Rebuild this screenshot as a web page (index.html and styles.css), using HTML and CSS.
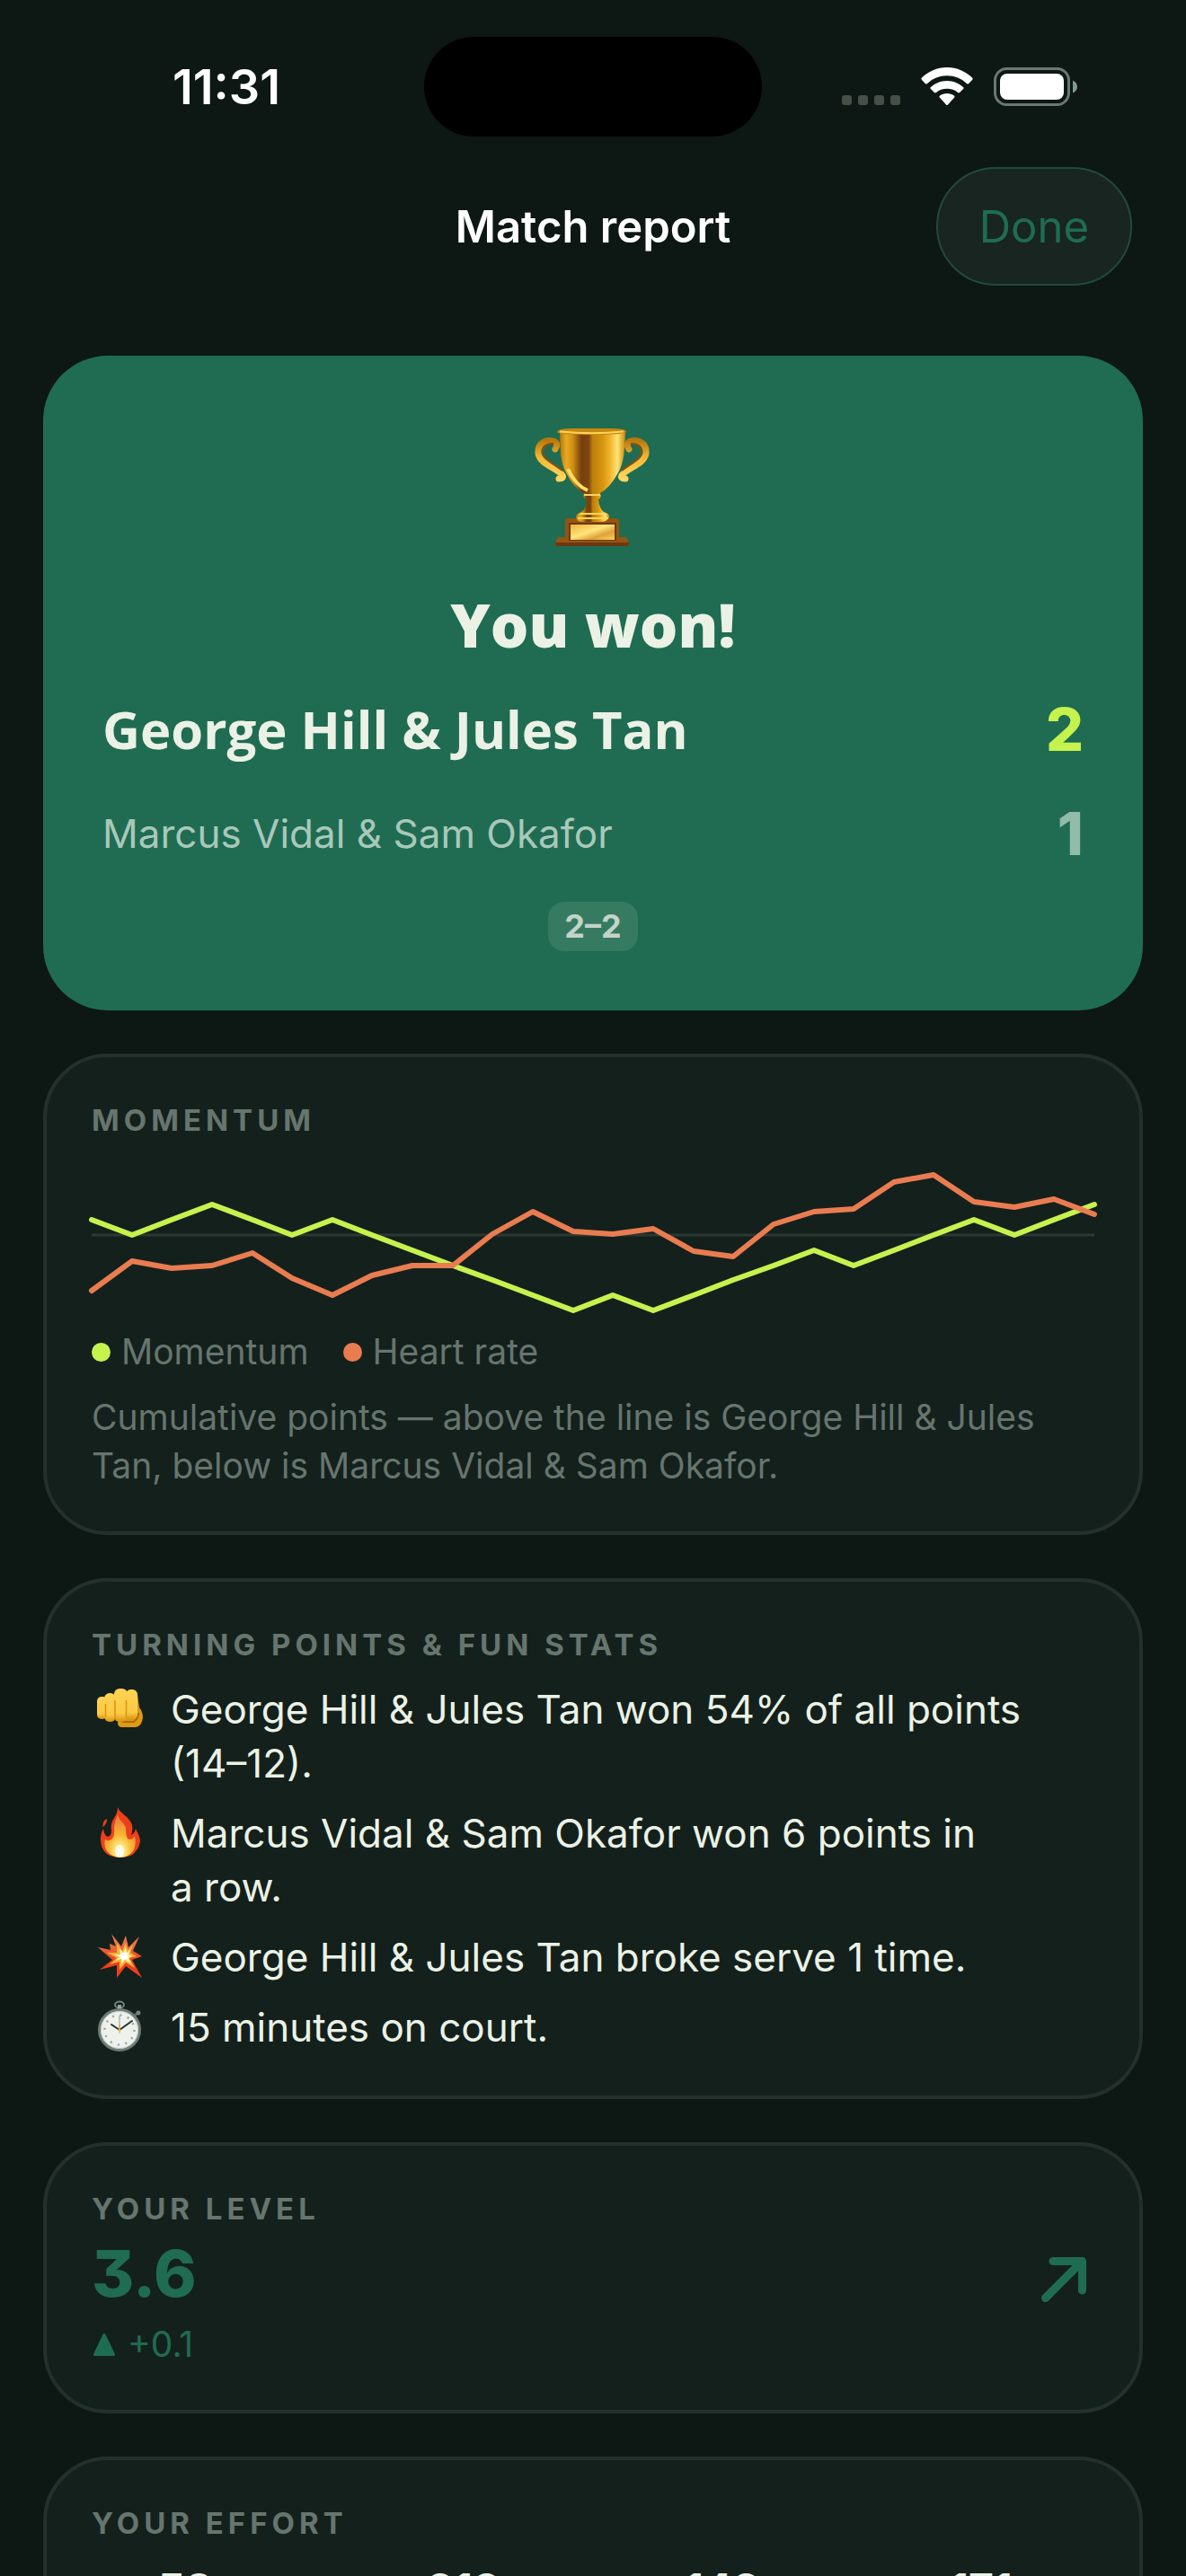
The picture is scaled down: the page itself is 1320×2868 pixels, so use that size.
FILE: index.html
```
<!DOCTYPE html>
<html lang="en">
<head>
  <meta charset="UTF-8" />
  <meta name="viewport" content="width=device-width, initial-scale=1" />
  <title>Match report</title>
  <link rel="stylesheet" href="styles.css">
</head>
<body>
<div class="screen">
  <div class="status-bar">
    <span class="time">11:31</span>
    <div class="island"></div>
    <div class="status-icons">
      <svg width="65" height="43" viewBox="0 0 65 43" fill="#465048" aria-hidden="true">
        <rect x="0" y="31" width="11" height="11" rx="3"/>
        <rect x="18" y="31" width="11" height="11" rx="3"/>
        <rect x="36" y="31" width="11" height="11" rx="3"/>
        <rect x="54" y="31" width="11" height="11" rx="3"/>
      </svg>
      <svg width="58" height="43" viewBox="0 0 58 43" fill="#fff" aria-hidden="true">
        <path d="M29 0C40 0 50 4.500 57.500 12Q58 13 57 14L53 18.200Q52 19 51 18Q42 9.300 29 9.300T7 18Q6 19 5 18.200L1 14Q0 13 .5 12C8 4.500 18 0 29 0Z"/>
        <path d="M29 15C36 15 42.500 17.800 47.300 22.300Q48 23 47.200 24L43 28Q42 28.800 41 28Q36 23.800 29 23.800T17 28Q16 28.800 15 28L10.800 24Q10 23 10.700 22.300C15.500 17.800 22 15 29 15Z"/>
        <path d="M29 29C32 29 35 30 37.200 31.700Q38 32.600 37.200 33.500L30 41.500Q29 42.600 28 41.500L20.800 33.500Q20 32.600 20.800 31.700C23 30 26 29 29 29Z"/>
      </svg>
      <svg width="94" height="43" viewBox="0 0 94 43" aria-hidden="true">
        <rect x="1.500" y="1.500" width="82" height="40" rx="13" fill="none" stroke="#6a7872" stroke-width="3"/>
        <rect x="7" y="7" width="71" height="29" rx="8" fill="#fff"/>
        <path d="M88 14.500Q93 17 93 21.500T88 28.500Z" fill="#7f9a8e"/>
      </svg>
    </div>
  </div>

  <header class="nav-bar">
    <h1>Match report</h1>
    <button type="button" class="done">Done</button>
  </header>

  <main>
    <section class="hero">
      <svg class="trophy" viewBox="0 0 160 156" role="img" aria-label="Trophy">
        <defs>
          <linearGradient id="cup" x1="0" x2="1">
            <stop offset="0" stop-color="#b87508"/>
            <stop offset=".1" stop-color="#e9a923"/>
            <stop offset=".2" stop-color="#cf8e12"/>
            <stop offset=".33" stop-color="#74400f"/>
            <stop offset=".44" stop-color="#7d4510"/>
            <stop offset=".5" stop-color="#bb7f0c"/>
            <stop offset=".66" stop-color="#d8960f"/>
            <stop offset=".76" stop-color="#f0b22b"/>
            <stop offset=".88" stop-color="#ffe574"/>
            <stop offset="1" stop-color="#c8860e"/>
          </linearGradient>
          <linearGradient id="handle" x1="0" y1="0" x2="0" y2="1">
            <stop offset="0" stop-color="#b87a0d"/>
            <stop offset=".45" stop-color="#f3b934"/>
            <stop offset="1" stop-color="#ffd65c"/>
          </linearGradient>
          <linearGradient id="plate" x1="0" y1="0" x2="1" y2="1">
            <stop offset="0" stop-color="#eeb23a"/>
            <stop offset=".45" stop-color="#ffe57a"/>
            <stop offset=".7" stop-color="#dfa23c"/>
            <stop offset="1" stop-color="#ffd356"/>
          </linearGradient>
        </defs>
        <g fill="none" stroke="url(#handle)" stroke-linecap="round">
          <path d="M38 38Q42 32 37 29.500C27 26 18 32 19 43C21 55 40 59 46 67Q48 71 42 71" stroke-width="7"/>
          <path d="M120 38Q116 32 121 29.500C131 26 140 32 139 43C137 55 118 59 112 67Q110 71 116 71" stroke-width="7"/>
        </g>
        <g fill="none" stroke="#8a4d10" stroke-width="2">
          <path d="M36 32C26 31 23 38 25 44C28 52 39 56 46 62"/>
          <path d="M122 32C132 31 135 38 133 44C130 52 119 56 112 62"/>
        </g>
        <path d="M49 118Q49 115 53 115H105Q109 115 109 118V136H116Q120 138 120 145.700H38Q38 138 42 136H49Z" fill="#94560f"/>
        <path d="M38 142H120V144Q120 146 118 146H40Q38 146 38 144Z" fill="#6d3712"/>
        <rect x="53" y="120" width="53" height="20" fill="#6d3712"/>
        <rect x="55" y="122" width="49" height="17" fill="url(#plate)"/>
        <path d="M72 84H86L89 90Q88 93 86 94Q87 104 92 108Q99 110 98 114Q96 119 88 119H70Q61 119 61 114Q61 110 67 108Q73 104 73 94Q70 93 69 90Z" fill="url(#cup)"/>
        <path d="M70 89H88M66 110H94M63 115H97" stroke="#ffd45a" stroke-width="2" fill="none"/>
        <path d="M43 19H116C115 40 115 53 107 66Q98 82 88 87H70Q59 82 51 66C43 53 44 40 43 19Z" fill="url(#cup)"/>
        <path d="M52 60Q60 78 74 84" stroke="#ffdc66" stroke-width="4" fill="none"/>
        <path d="M40 19Q41 15 60 15H98Q117 15 117 19Q117 22 79 22T40 19Z" fill="#c9870e"/>
        <path d="M43 18.500Q79 22 114 18.500" stroke="#ffd45a" stroke-width="2" fill="none"/>
      </svg>
      <h2>You won!</h2>
      <div class="team winner">
        <span class="team-name">George Hill &amp; Jules Tan</span>
        <span class="score">2</span>
      </div>
      <div class="team">
        <span class="team-name">Marcus Vidal &amp; Sam Okafor</span>
        <span class="score">1</span>
      </div>
      <span class="set-score">2–2</span>
    </section>

    <section class="card momentum">
      <h3>Momentum</h3>
      <svg class="chart" viewBox="0 0 1116 168" preserveAspectRatio="none" role="img" aria-label="Momentum and heart rate over the match">
        <path d="M0 84H1116" stroke="#2c3832" stroke-width="3"/>
        <g fill="none" stroke-width="6" stroke-linecap="round" stroke-linejoin="round">
          <polyline stroke="#c6f24e" points="0,67 45,84 89,67 134,50 179,67 223,84 268,67 312,84 357,101 402,118 446,134 491,151 536,168 580,151 625,168 670,151 714,134 759,118 804,101 848,118 893,101 937,84 982,67 1027,84 1071,67 1116,50"/>
          <polyline stroke="#e97c50" points="0,146 45,113 89,121 134,118 179,104 223,132 268,151 312,129 357,118 402,118 446,83 491,58 536,80 580,83 625,77 670,102 714,108 759,72 804,58 848,55 893,25 937,17 982,47 1027,53 1071,44 1116,61"/>
        </g>
      </svg>
      <div class="legend">
        <span class="legend-item"><i class="dot lime"></i>Momentum</span>
        <span class="legend-item"><i class="dot orange"></i>Heart rate</span>
      </div>
      <p class="caption">Cumulative points — above the line is George Hill &amp; Jules Tan, below is Marcus Vidal &amp; Sam Okafor.</p>
    </section>

    <section class="card">
      <h3>Turning points &amp; fun stats</h3>
      <ul class="stats">
        <li>
          <svg viewBox="0 0 62 60" aria-hidden="true">
            <defs>
              <linearGradient id="finger" x1="0" y1="0" x2="0" y2="1">
                <stop offset="0" stop-color="#ffd352"/>
                <stop offset=".75" stop-color="#fcc945"/>
                <stop offset="1" stop-color="#d9930f"/>
              </linearGradient>
            </defs>
            <path d="M40 9Q49 6 51 13L53 28Q57 33 57 39Q56 49 49 50H34Q29 50 29 45Z" fill="#dc9a17"/>
            <path d="M34 44H47Q52 40 52 34" stroke="#a96b08" stroke-width="2" fill="none"/>
            <g fill="url(#finger)">
              <rect x="6" y="16" width="11" height="25" rx="5"/>
              <rect x="14" y="12" width="13" height="32" rx="6"/>
              <rect x="38" y="8" width="13" height="34" rx="6"/>
              <rect x="25" y="7" width="15" height="37" rx="6"/>
            </g>
            <path d="M15.500 24V39M26 20V41M38.500 20V41" stroke="#d9930f" stroke-width="1.500"/>
          </svg>
          <span>George Hill &amp; Jules Tan won 54% of all points (14–12).</span>
        </li>
        <li>
          <svg viewBox="0 0 62 60" aria-hidden="true">
            <defs>
              <radialGradient id="flame" cx=".5" cy=".85" r=".7">
                <stop offset="0" stop-color="#fffbe6"/>
                <stop offset=".2" stop-color="#ffe987"/>
                <stop offset=".55" stop-color="#f9b730"/>
                <stop offset="1" stop-color="#ec8a3c"/>
              </radialGradient>
            </defs>
            <path d="M29 1C31 8 42 11 45 21Q46 27 44 32Q48 30 49 25C51 30 54 33 54 39Q53 46 49 50Q45 57 32 57T14 50Q10 45 10 37Q10 30 13 25Q14 33 18 34Q22 33 22 27C20 14 29 13 29 1Z" fill="#ee3f1b"/>
            <path d="M17 14Q17 20 12.500 23Q12 16 17 14Z" fill="#ee3f1b"/>
            <path d="M29 10C31 17 38 19 38 26Q38 36 42 37Q46 37 48 33Q50 44 46 50Q41 57 32 57T17 50Q13 44 15 37Q19 40 23 36Q26 32 25 25Q25 19 29 10Z" fill="url(#flame)"/>
            <ellipse cx="31" cy="50" rx="5" ry="7" fill="#fbfbee"/>
          </svg>
          <span>Marcus Vidal &amp; Sam Okafor won 6 points in<br>a row.</span>
        </li>
        <li>
          <svg viewBox="0 0 62 60" aria-hidden="true">
            <defs>
              <linearGradient id="blast" x1="0" y1="0" x2="0" y2="1">
                <stop offset=".2" stop-color="#ea7449"/>
                <stop offset=".6" stop-color="#ee3f1b"/>
              </linearGradient>
            </defs>
            <polygon points="22,4 33,18 38,6 41,19 53,7 46,23 56,29 45,33 56,53 38,40 28,53 28,39 9,44 23,33 7,19 21,22 20,15 27,18" fill="url(#blast)"/>
            <polygon points="28,14 34,23 38,14 40,22 46,16 43,25 50,29 42,31 48,42 38,36 31,44 31,35 20,38 28,31 17,25 28,25" fill="#f8b33c"/>
            <polygon points="31,20 35,25 38,19 39,25 43,22 41,27 45,29 41,31 44,37 37,33 33,38 33,32 26,34 31,30 25,27 32,27" fill="#fff3b0"/>
            <circle cx="36" cy="29" r="4" fill="#fff"/>
          </svg>
          <span>George Hill &amp; Jules Tan broke serve 1 time.</span>
        </li>
        <li>
          <svg viewBox="0 0 62 60" aria-hidden="true">
            <ellipse cx="31" cy="5" rx="5" ry="3.500" fill="none" stroke="#73827b" stroke-width="2"/>
            <rect x="29" y="5" width="4" height="6" fill="#9aa7a1"/>
            <path d="M47 18L52 13" stroke="#56655f" stroke-width="3"/>
            <circle cx="52" cy="14" r="2.500" fill="#73827b"/>
            <circle cx="31" cy="33" r="22.500" fill="#eef1ec" stroke="#6e7d76" stroke-width="3"/>
            <circle cx="31" cy="33" r="20.500" fill="none" stroke="#c5cfc8" stroke-width="1"/>
            <circle cx="31" cy="33" r="16.500" fill="none" stroke="#99a59e" stroke-width="2.500" stroke-dasharray="2 6.640"/>
            <path d="M31 33V17" stroke="#8f9a94" stroke-width="1"/>
            <path d="M31 33L22 27M31 33L45 23" stroke="#25332c" stroke-width="2" stroke-linecap="round"/>
            <path d="M31 37V27" stroke="#e2b23b" stroke-width="1"/>
            <circle cx="31" cy="33" r="1.500" fill="#e2b23b"/>
          </svg>
          <span>15 minutes on court.</span>
        </li>
      </ul>
    </section>

    <section class="card level">
      <div class="level-text">
        <h3>Your level</h3>
        <strong class="rating">3.6</strong>
        <span class="change">
          <svg width="28" height="28" viewBox="0 0 28 28" aria-hidden="true"><path d="M14 3.500L24.500 25.500H3.500Z" fill="currentColor" stroke="currentColor" stroke-width="3" stroke-linejoin="round"/></svg>
          +0.1
        </span>
      </div>
      <svg class="trend" width="60" height="60" viewBox="0 0 60 60" aria-hidden="true">
        <path d="M5.500 50.500L46 10M14 9.500H46.500V42" fill="none" stroke="currentColor" stroke-width="9" stroke-linecap="round" stroke-linejoin="round"/>
      </svg>
    </section>

    <section class="card effort">
      <h3>Your effort</h3>
      <div class="effort-row">
        <strong>58m</strong>
        <strong>213</strong>
        <strong>142</strong>
        <strong>171</strong>
      </div>
    </section>
  </main>
</div>
</body>
</html>
```
FILE: styles.css
```
:root {
  --bg: #0d1713;
  --card: #14201c;
  --line: #24302b;
  --green: #1f6c53;
  --lime: #c6f24e;
  --orange: #e97c50;
  --text: #ebf2e5;
  --muted: #66756e;
}
* {
  box-sizing: border-box;
}
body {
  margin: 0;
  background-color: var(--bg);
  color: var(--text);
  font-family: Inter, "Liberation Sans", sans-serif;
}
h1,
h2,
h3,
p,
ul {
  margin: 0;
  padding: 0;
}
svg {
  display: block;
  flex-shrink: 0;
}
.screen {
  height: 100vh;
  overflow: hidden;
}

/* status bar */
.status-bar {
  display: grid;
  grid-template-columns: 1fr 376px 1fr;
  align-items: center;
  justify-items: center;
  padding: 41px 32px 34px;
  color: #fff;
}
.time {
  font-size: 54px;
  font-weight: 600;
}
.island {
  width: 100%;
  height: 111px;
  border-radius: 56px;
  background-color: #000;
}
.status-icons {
  display: flex;
  gap: 23px;
}

/* title bar */
.nav-bar {
  display: grid;
  grid-template-columns: 1fr auto 1fr;
  align-items: center;
  padding: 0 60px;
  margin-bottom: 78px;
}
h1 {
  grid-column: 2;
  font-size: 49px;
  font-weight: 600;
  color: #fff;
}
.done {
  justify-self: end;
  height: 132px;
  padding: 0 46px;
  border: 2px solid #214a3c;
  border-radius: 66px;
  background-color: #182521;
  color: var(--green);
  font-family: inherit;
  font-size: 49px;
  cursor: pointer;
}

main {
  display: flex;
  flex-direction: column;
  gap: 48px;
  padding: 0 48px;
}

/* result */
.hero {
  display: flex;
  flex-direction: column;
  align-items: center;
  gap: 36px;
  padding: 66px;
  border-radius: 72px;
  background-color: var(--green);
}
.trophy {
  width: 160px;
  height: 156px;
}
h2 {
  font-family: "Open Sans", sans-serif;
  font-size: 67px;
  font-weight: 800;
  line-height: 82px;
}
.team {
  align-self: stretch;
  display: flex;
  align-items: center;
  justify-content: space-between;
  line-height: 80px;
}
.team-name {
  font-size: 44px;
  color: #a9c8b9;
}
.score {
  font-size: 66px;
  font-weight: 800;
  color: #92bba9;
}
.winner .team-name {
  font-family: "Open Sans", sans-serif;
  font-size: 58px;
  font-weight: 700;
  color: var(--text);
}
.winner .score {
  color: var(--lime);
}
.set-score {
  padding: 0 18px;
  border-radius: 18px;
  background-color: #367a62;
  color: #c2d4c7;
  font-size: 36px;
  font-weight: 700;
  line-height: 55px;
}

/* cards */
.card {
  padding: 50px 50px 46px;
  border: 4px solid var(--line);
  border-radius: 72px;
  background-color: var(--card);
}
h3 {
  font-size: 33px;
  font-weight: 700;
  line-height: 40px;
  letter-spacing: 5px;
  text-transform: uppercase;
  color: var(--muted);
}
.momentum,
.effort {
  display: flex;
  flex-direction: column;
  gap: 24px;
}
.chart {
  width: 100%;
  height: 168px;
  overflow: visible;
}
.legend {
  display: flex;
  gap: 38px;
  font-size: 39px;
  line-height: 44px;
  color: var(--muted);
}
.legend-item {
  display: flex;
  align-items: center;
  gap: 12px;
}
.dot {
  width: 21px;
  height: 21px;
  border-radius: 50%;
}
.lime {
  background-color: var(--lime);
}
.orange {
  background-color: var(--orange);
}
.caption {
  font-size: 39px;
  line-height: 54px;
  color: var(--muted);
}

.stats {
  display: flex;
  flex-direction: column;
  gap: 18px;
  margin-top: 22px;
  list-style: none;
  font-size: 44px;
  line-height: 60px;
}
.stats li {
  display: flex;
  gap: 26px;
}
.stats svg {
  width: 62px;
  height: 60px;
}

.level {
  display: flex;
  align-items: center;
  justify-content: space-between;
}
.level-text {
  display: flex;
  flex-direction: column;
  gap: 10px;
}
.rating {
  font-size: 72px;
  font-weight: 800;
  line-height: 84px;
  font-feature-settings: "cv09";
  color: var(--green);
}
.change {
  display: flex;
  align-items: center;
  gap: 12px;
  font-size: 39px;
  line-height: 54px;
  color: var(--green);
}
.trend {
  color: var(--green);
}

.effort-row {
  display: grid;
  grid-template-columns: repeat(4, 1fr);
  gap: 36px;
  text-align: center;
  font-size: 48px;
  line-height: 60px;
}
```
